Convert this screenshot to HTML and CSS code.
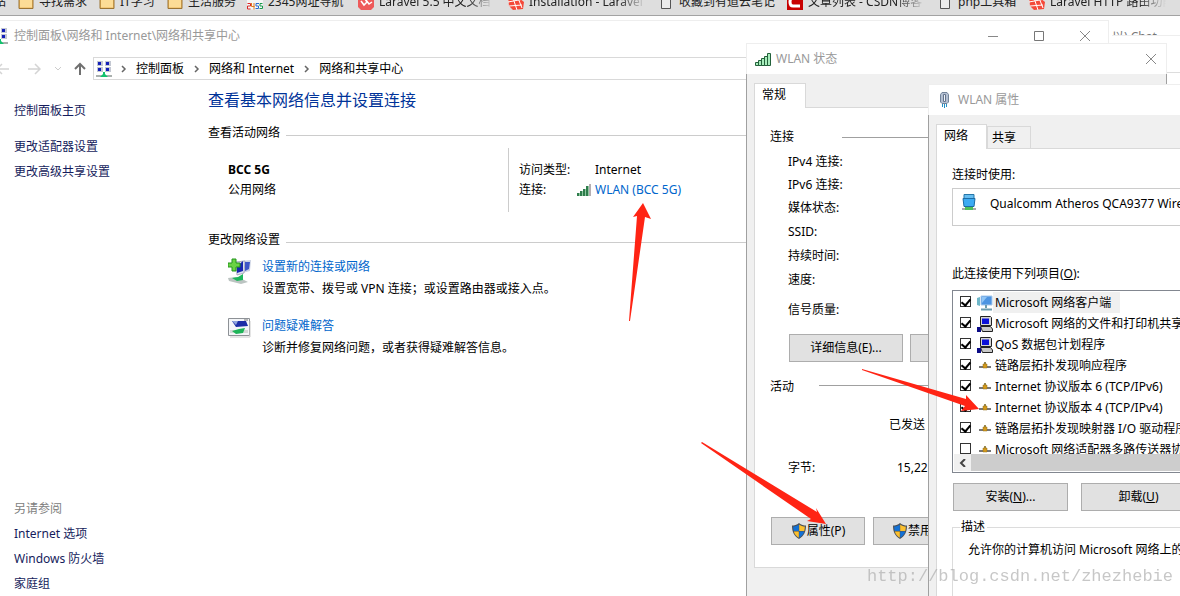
FILE: index.html
```html
<!DOCTYPE html>
<html lang="zh-CN">
<head>
<meta charset="utf-8">
<title>网络和共享中心</title>
<link rel="stylesheet" href="styles.css">
</head>
<body>
<svg class="defs" aria-hidden="true">
  <defs>
    <symbol id="folder" viewBox="0 0 16 16"><path d="M1 2h5l2 2h7v10.5H1z" fill="#e9b45b" stroke="#9b7434"/><path d="M2 5h12v8.500H2z" fill="#fcdc96"/></symbol>
    <symbol id="page" viewBox="0 0 12 16"><path d="M1.500 1.500h9v13h-9z" fill="#ececec" stroke="#555"/></symbol>
    <symbol id="laravel" viewBox="0 0 16 16"><path d="M0 2l6-2 10 8-1 7-10 1-4-4z" fill="#f4493a"/><path d="M0 8l16-3M4 1l5 15M1 12l13-1M10 4l4 10" stroke="#fff" fill="none"/></symbol>
    <symbol id="netgrid" viewBox="0 0 16 16">
      <g fill="#c4c8d2"><path d="M1 0h6v5H1zM9 0h6v5H9zM1 6h6v5H1zM9 6h6v5H9z"/></g>
      <g fill="#1420b8"><path d="M2 1h3v3H2zM10 1h3v3h-3zM2 7h3v3H2zM10 7h3v3h-3z"/></g>
      <path d="M0 14h16v2H0z" fill="#aab0ae"/><path d="M7 11h2v2l3 3H4l3-3z" fill="#13c26e"/>
    </symbol>
    <symbol id="close" viewBox="0 0 12 12"><path d="M1 1l10 10M11 1L1 11" stroke="#888" fill="none"/></symbol>
    <symbol id="shield" viewBox="0 0 16 16">
      <path d="M8 0C6 2 3 2.500 1 2.500 1 9 3 13 8 16c5-3 7-7 7-13.500C13 2.500 10 2 8 0z" fill="#4a4f55"/>
      <path d="M7.800 1.500C6 3 4 3.500 2.200 3.600c0 1.600.1 3 .5 4.400h5.100z" fill="#1271d6"/>
      <path d="M8.200 1.500C10 3 12 3.500 13.800 3.600c0 1.600-.1 3-.5 4.400H8.200z" fill="#fcc02e"/>
      <path d="M2.800 8.400c.8 2.700 2.300 4.700 5 6.300V8.400z" fill="#fcc02e"/>
      <path d="M13.200 8.400c-.8 2.700-2.300 4.700-5 6.300V8.400z" fill="#1271d6"/>
    </symbol>
    <symbol id="pc" viewBox="0 0 16 16">
      <path d="M3.500.5h10l1 1v8h-11z" fill="#d5d5d5" stroke="#222"/><path d="M5 2.500h7V8H5z" fill="#0a10d8"/>
      <path d="M3.500 10.500h10l2 2.500v2.500h-10z" fill="#c9c9c9" stroke="#222"/><path d="M0 11h4v5H0z" fill="#0a0a86"/>
    </symbol>
    <symbol id="proto" viewBox="0 0 16 16"><path d="M2 9h12" stroke="#777" stroke-width="2"/><path d="M7 4h2v2H7z" fill="#9a8a50"/><path d="M6 6h4v4H6z" fill="#d49a1c" stroke="#8d6a18" stroke-width=".5"/></symbol>
    <symbol id="client" viewBox="0 0 16 16"><path d="M0 3l3-1v9l-3-1z" fill="#6fb7c9"/><path d="M4 1h11v9H4z" fill="#4d94e2" stroke="#a8c9ec"/><path d="M5 2h5L5 8z" fill="#90c5f6"/><path d="M9 10v3M4 14.500h11" stroke="#6d9cae" stroke-width="2"/></symbol>
  </defs>
</svg>
<div class="desktop">
  <nav class="bookmarks">
    <a class="bookmark bookmark-cut" href="#">网站</a>
    <a class="bookmark" href="#"><svg class="fav"><use href="#folder"/></svg>寻找需求</a>
    <a class="bookmark" href="#"><svg class="fav"><use href="#folder"/></svg>IT学习</a>
    <a class="bookmark" href="#"><svg class="fav"><use href="#folder"/></svg>生活服务</a>
    <a class="bookmark" href="#"><svg class="fav" viewBox="0 0 16 16"><path d="M0 1h16v14.500H0z" fill="#f5f5f5"/><path d="M.5 9.500h3v2.500h-3v3h3" stroke="#d82727" fill="none"/><path d="M4.500 9v3.500h3M7 9v6.500" stroke="#dd7a20" fill="none"/><path d="M12 9.500H9v2.500h2.500v2.500H8.500" stroke="#2868d0" fill="none"/><path d="M15.500 9.500h-2.500v2.500h2.500v2.500h-3" stroke="#18994a" fill="none"/></svg>2345网址导航</a>
    <a class="bookmark fade" href="#"><svg class="fav" viewBox="0 0 16 16"><path d="M0 0h16v13l-3 3H3l-3-3z" fill="#ee5a5a"/><path d="M3 7l3 4 3-3-2-3M8 6l3 4 3-2" stroke="#fff" stroke-width="1.500" fill="none"/></svg>Laravel 5.5 中文文档</a>
    <a class="bookmark fade" href="#"><svg class="fav"><use href="#laravel"/></svg>Installation - Laravel</a>
    <a class="bookmark" href="#"><svg class="fav fav-page"><use href="#page"/></svg>收藏到有道云笔记</a>
    <a class="bookmark fade" href="#"><svg class="fav" viewBox="0 0 16 16"><path d="M0 0h16v16H0z" fill="#c80000"/><path d="M13 4H6q-3 0-3 4t3 4h7" stroke="#fff" stroke-width="3" fill="none"/></svg>文章列表 - CSDN博客</a>
    <a class="bookmark" href="#"><svg class="fav fav-page"><use href="#page"/></svg>php工具箱</a>
    <a class="bookmark fade" href="#"><svg class="fav"><use href="#laravel"/></svg>Laravel HTTP 路由功能</a>
  </nav>
  <div class="backdrop"><span class="backdrop-text">以) Chat ,</span></div>

  <section class="window center">
    <header class="titlebar center-title">
      <svg class="icon16"><use href="#netgrid"/></svg>
      <span>控制面板\网络和 Internet\网络和共享中心</span>
      <span class="caption">
        <button class="cap" aria-label="最小化"><svg width="12" height="12"><path d="M1 6.500h10" stroke="#888"/></svg></button>
        <button class="cap" aria-label="最大化"><svg width="12" height="12"><path d="M1.500 1.500h9v9h-9z" stroke="#777" fill="none"/></svg></button>
        <button class="cap" aria-label="关闭"><svg width="12" height="12"><use href="#close"/></svg></button>
      </span>
    </header>
    <nav class="navrow">
      <button class="nav-btn" aria-label="后退"><svg width="14" height="14"><path d="M1 7h12M6 2L1 7l5 5" stroke="#d4d4d4" stroke-width="1.500" fill="none"/></svg></button>
      <button class="nav-btn" aria-label="前进"><svg width="14" height="14"><path d="M1 7h12M8 2l5 5-5 5" stroke="#d4d4d4" stroke-width="1.500" fill="none"/></svg></button>
      <button class="nav-btn" aria-label="历史"><svg width="8" height="6"><path d="M1 1l3 3 3-3" stroke="#ccc" fill="none"/></svg></button>
      <button class="nav-btn" aria-label="上移"><svg width="14" height="14"><path d="M7 13V2M2 7l5-5 5 5" stroke="#707070" stroke-width="2" fill="none"/></svg></button>
      <div class="address">
        <svg class="icon16"><use href="#netgrid"/></svg>
        <svg class="sep"><path d="M1 1l3 3-3 3" stroke="#666" stroke-width="1.500" fill="none"/></svg><a href="#">控制面板</a>
        <svg class="sep"><path d="M1 1l3 3-3 3" stroke="#666" stroke-width="1.500" fill="none"/></svg><a href="#">网络和 Internet</a>
        <svg class="sep"><path d="M1 1l3 3-3 3" stroke="#666" stroke-width="1.500" fill="none"/></svg><a href="#">网络和共享中心</a>
      </div>
    </nav>
    <div class="center-body">
      <aside class="sidebar">
        <a class="side-home" href="#">控制面板主页</a>
        <a href="#">更改适配器设置</a>
        <a href="#">更改高级共享设置</a>
        <span class="see-also">另请参阅</span>
        <a href="#">Internet 选项</a>
        <a href="#">Windows 防火墙</a>
        <a href="#">家庭组</a>
      </aside>
      <main class="main">
        <h1>查看基本网络信息并设置连接</h1>
        <h2 class="rule">查看活动网络</h2>
        <div class="network">
          <div class="network-name"><strong>BCC 5G</strong><span>公用网络</span></div>
          <dl class="network-info">
            <dt>访问类型:</dt><dd>Internet</dd>
            <dt class="with-signal">连接:
              <svg width="15" height="12"><path d="M0 9h3v3H0zM3 7h3v5H3zM6 5h3v7H6zM9 2h3v10H9z" fill="#8fc7a0"/><path d="M0 9h2v3H0zM3 7h2v5H3zM6 5h2v7H6zM9 2h2v10H9z" fill="#2f7d4c"/><path d="M12 0h2v12h-2z" fill="#b5aeb2"/></svg></dt>
            <dd><a href="#">WLAN (BCC 5G)</a></dd>
          </dl>
        </div>
        <h2 class="rule change">更改网络设置</h2>
        <div class="task">
          <svg width="24" height="26" viewBox="0 0 24 26">
            <path d="M12 3l11-1-1 11-8 2z" fill="#ccd3e4"/><path d="M8 4l9-1-1 12-7 2z" fill="#dde3f4" stroke="#aab"/><path d="M9 8l6-5v10l-6 2z" fill="#1826b0"/><path d="M17 4h5l-1 7-4 2z" fill="#3d55c8"/>
            <path d="M0 20l8-1 6 2 6 3-7 2-12-3z" fill="#bcc4c2"/><path d="M4 20l6-1 5-3v6l-6 1z" fill="#1eb75c"/>
            <path d="M4 1h4v4h4v4H8v4H4V9H0V5h4z" fill="#6bd344" stroke="#25951c"/>
          </svg>
          <div><a href="#">设置新的连接或网络</a><p>设置宽带、拨号或 VPN 连接；或设置路由器或接入点。</p></div>
        </div>
        <div class="task second">
          <svg width="24" height="22" viewBox="0 0 24 22">
            <path d="M.5 1.500h21v17H.5z" fill="#f4f6f8" stroke="#8d9196"/><path d="M2 20h20V4" stroke="#ccc" fill="none"/><path d="M16 3h4" stroke="#777"/>
            <path d="M4 4h14l2 5-12 1z" fill="#1c2ea6"/><path d="M4 4h6l-2 4z" fill="#8ea5dd"/><path d="M2 13h18v3H2z" fill="#d4d8d6"/><path d="M4 14l7-2 6-1-2 5-7 1z" fill="#1eb458"/>
          </svg>
          <div><a href="#">问题疑难解答</a><p>诊断并修复网络问题，或者获得疑难解答信息。</p></div>
        </div>
      </main>
    </div>
  </section>

  <section class="window dialog status">
    <header class="titlebar">
      <svg width="17" height="13" class="title-icon"><path d="M.5 9.500h3v3h-3zM3.500 7.500h3v5h-3zM6.500 5.500h3v7h-3zM9.500 3.500h3v9h-3zM12.500.5h3v12h-3z" fill="#a8eebc" stroke="#23613b"/></svg>
      <span>WLAN 状态</span>
      <span class="caption"><button class="cap" aria-label="关闭"><svg width="12" height="12"><use href="#close"/></svg></button></span>
    </header>
    <div class="dialog-body">
      <div class="tabs" role="tablist"><button class="tab active" role="tab" aria-selected="true">常规</button></div>
      <div class="panel status-panel">
        <h3 class="group">连接</h3>
        <ul class="facts"><li>IPv4 连接:</li><li>IPv6 连接:</li><li>媒体状态:</li><li>SSID:</li><li>持续时间:</li><li>速度:</li></ul>
        <p class="signal">信号质量:</p>
        <div class="buttons details"><button class="btn">详细信息(E)...</button><button class="btn" aria-label="无线属性"></button></div>
        <h3 class="group activity">活动</h3>
        <p class="sent">已发送</p>
        <p class="bytes"><span>字节:</span><span>15,22</span></p>
        <div class="buttons actions">
          <button class="btn"><svg class="icon16"><use href="#shield"/></svg>属性(P)</button>
          <button class="btn"><svg class="icon16"><use href="#shield"/></svg>禁用(D)</button>
        </div>
      </div>
    </div>
  </section>

  <section class="window dialog props">
    <header class="titlebar">
      <svg width="12" height="16" viewBox="0 0 12 16" class="title-icon"><path d="M3 .5h5l1.500 2V10L8 11.500H3L1.500 10V2.500z" fill="#b4c0d2" stroke="#73849a"/><path d="M4.500 2.500h2v7h-2z" fill="#f2f5f9" stroke="#64748c"/><path d="M3.500 12v3M5.500 12v4M7.500 12v3" stroke="#2390c4"/></svg>
      <span>WLAN 属性</span>
    </header>
    <div class="dialog-body">
      <div class="tabs" role="tablist"><button class="tab active" role="tab" aria-selected="true">网络</button><button class="tab" role="tab">共享</button></div>
      <div class="panel props-panel">
        <p>连接时使用:</p>
        <div class="adapter"><svg width="16" height="16"><path d="M3 .5h10v6H3z" fill="#66bdf0" stroke="#2576a8"/><path d="M2 4.500h12l-1 8H3z" fill="#3cabf3" stroke="#1c6ca5"/><path d="M1 14h14v2H1z" fill="#aaa"/><path d="M4 13h8v3H4z" fill="#4dc05a"/></svg>Qualcomm Atheros QCA9377 Wireless Network Adapter</div>
        <p class="items-label">此连接使用下列项目(<u>O</u>):</p>
        <div class="listbox">
          <div class="items">
            <label class="item"><input type="checkbox" checked><svg class="icon16"><use href="#client"/></svg><span class="selected">Microsoft 网络客户端</span></label>
            <label class="item"><input type="checkbox" checked><svg class="icon16"><use href="#pc"/></svg><span>Microsoft 网络的文件和打印机共享</span></label>
            <label class="item"><input type="checkbox" checked><svg class="icon16"><use href="#pc"/></svg><span>QoS 数据包计划程序</span></label>
            <label class="item"><input type="checkbox" checked><svg class="icon16"><use href="#proto"/></svg><span>链路层拓扑发现响应程序</span></label>
            <label class="item"><input type="checkbox" checked><svg class="icon16"><use href="#proto"/></svg><span>Internet 协议版本 6 (TCP/IPv6)</span></label>
            <label class="item"><input type="checkbox" checked><svg class="icon16"><use href="#proto"/></svg><span>Internet 协议版本 4 (TCP/IPv4)</span></label>
            <label class="item"><input type="checkbox" checked><svg class="icon16"><use href="#proto"/></svg><span>链路层拓扑发现映射器 I/O 驱动程序</span></label>
            <label class="item"><input type="checkbox"><svg class="icon16"><use href="#proto"/></svg><span>Microsoft 网络适配器多路传送器协议</span></label>
          </div>
          <div class="scroll"><button class="scroll-btn" aria-label="向左滚动"><svg width="8" height="8"><path d="M6 0L2 4l4 4" stroke="#444" stroke-width="2" fill="none"/></svg></button><span class="thumb"></span></div>
        </div>
        <div class="buttons manage"><button class="btn">安装(<u>N</u>)...</button><button class="btn">卸载(<u>U</u>)</button></div>
        <fieldset class="desc"><legend>描述</legend><p>允许你的计算机访问 Microsoft 网络上的资源。</p></fieldset>
      </div>
    </div>
  </section>

  <svg class="arrows" aria-hidden="true">
    <path d="M643 203l-10 14 4-1-8 105h1l15-104 6 2z"/>
    <path d="M826 524l-10-16 1 4-115-70-1 1 110 76-4 2z"/>
    <path d="M979 409l-13-14v4l-104-30v1l103 36-4 5z"/>
  </svg>
  <span class="watermark">http://blog.csdn.net/zhezhebie</span>
</div>
</body>
</html>
```
FILE: styles.css
```css
* { box-sizing: border-box; }
body { margin: 0; font: 12px/20px "Noto Sans", "Noto Sans CJK SC", sans-serif; color: #000; }
h1, h2, h3, p, ul, dl, dd { margin: 0; padding: 0; font-weight: normal; font-size: 12px; }
a { color: #0066cc; text-decoration: none; }
button { font: inherit; color: inherit; padding: 0; border: 0; background: none; }
svg { display: block; flex: none; }
.defs { position: absolute; width: 0; height: 0; }
.icon16 { width: 16px; height: 16px; }

.desktop { position: relative; height: 100vh; overflow: hidden; background: #fff; white-space: nowrap; }

.bookmarks {
  display: grid;
  grid-template-columns: 18px 81px 68px 80px 111px 150px 152px 127px 152px 90px 151px;
  align-items: center;
  height: 28px;
  margin-top: -12px;
  background: #dedede;
  border-bottom: 1px solid #a3a3a3;
}
.bookmark { display: flex; align-items: center; gap: 5px; color: #222; overflow: hidden; }
.bookmark-cut { justify-content: flex-end; padding-right: 12px; }
.fav { width: 16px; height: 16px; }
.fav-page { width: 12px; margin-right: 2px; }
.fade { margin-right: 14px; -webkit-mask-image: linear-gradient(to right, #000 80%, transparent); mask-image: linear-gradient(to right, #000 80%, transparent); }

.backdrop { display: flex; justify-content: flex-end; height: 57px; border-bottom: 1px solid #ddd; }
.backdrop-text { width: 68px; height: 20px; padding-top: 11px; overflow: hidden; color: #777; border-bottom: 1px solid #eee; }

.window { position: absolute; background: #fff; border: 1px solid #eee; }
.titlebar { display: flex; align-items: center; height: 30px; color: #999; background: #fff; }
.caption { display: flex; margin-left: auto; }
.cap { display: flex; align-items: center; justify-content: center; width: 46px; height: 29px; }

.center { display: flex; flex-direction: column; top: 20px; left: 0; right: 71px; bottom: 0; border-left: 0; border-bottom: 0; }
.center-title { height: 29px; gap: 6px; }
.center-title .icon16 { margin-left: -8px; }
.navrow { display: flex; align-items: center; margin-top: 7px; gap: 13px; }
.nav-btn:first-child { margin-left: -4px; }
.nav-btn:nth-child(2) { margin-left: 4px; }
.nav-btn:nth-child(4) { margin-left: -2px; }
.address { display: flex; flex: 1; align-items: center; gap: 9px; height: 23px; margin-left: -7px; padding-left: 2px; border: 1px solid #d9d9d9; }
.address a { color: #000; }
.sep { width: 6px; height: 8px; }
.address .sep + a { margin-right: 1px; }
.center-body { display: flex; flex: 1; }
.sidebar { display: flex; flex-direction: column; width: 208px; padding: 18px 0 0 14px; line-height: 25px; }
.sidebar a { color: #151c5c; }
.side-home { margin-bottom: 11px; }
.see-also { margin-top: auto; color: #808080; }
.main { flex: 1; padding-top: 8px; }
.main h1 { font-size: 16px; line-height: 24px; color: #003399; }
.rule { display: flex; align-items: center; gap: 6px; margin-top: 11px; }
.rule::after { content: ""; flex: 1; height: 1px; margin-top: 4px; background: #ccc; }
.network { display: grid; grid-template-columns: 300px 1fr; margin-top: 5px; }
.network-name { display: flex; flex-direction: column; padding: 12px 0 0 20px; }
.network-info { display: grid; grid-template-columns: 76px 1fr; align-content: start; height: 64px; padding: 12px 0 0 10px; border-left: 1px solid #ccc; }
.with-signal { display: flex; align-items: center; justify-content: space-between; padding-right: 3px; }
.change { margin-top: 18px; }
.task { display: flex; gap: 10px; margin-top: 6px; padding-left: 20px; line-height: 22px; }
.task > svg { margin-top: 2px; }
.second { margin-top: 15px; }

.dialog { border-width: 1px 0 0; }
.dialog-body { padding: 9px 7px 40px; background: #f0f0f0; border-left: 1px solid #a0a0a0; border-right: 1px solid #a0a0a0; }
.title-icon { margin-right: 4px; }
.tabs { display: flex; align-items: flex-end; height: 25px; margin-bottom: -1px; }
.tab { height: 23px; padding: 0 14px 0 4px; border: 1px solid #d9d9d9; background: #f0f0f0; }
.tab.active { height: 25px; padding: 0 19px 2px 7px; border-bottom: 0; background: #fff; }
.props .tab.active { padding-right: 18px; }
.panel { border: 1px solid #d9d9d9; background: #fff; }
.buttons { display: flex; }
.btn { display: flex; align-items: center; justify-content: center; height: 28px; border: 1px solid #adadad; background: #e1e1e1; }

.status { top: 43px; left: 746px; right: 13px; }
.status .titlebar { padding-left: 8px; border-left: 1px solid #eee; border-right: 1px solid #eee; }
.status .cap { width: 30px; }
.status-panel { padding: 19px 15px 22px; }
.group { display: flex; align-items: center; }
.group::after { content: ""; flex: 1; height: 1px; margin-left: 48px; background: #a0a0a0; }
.facts { margin-top: 3px; padding-left: 18px; list-style: none; line-height: 23px; }
.facts li:nth-child(n+4) { padding-top: 1px; line-height: 23px; }
.signal { margin-top: 9px; padding-left: 18px; }
.details { gap: 7px; margin-top: 14px; padding-left: 19px; }
.details .btn { width: 114px; }
.activity { margin-top: 15px; }
.activity::after { margin: 0 0 4px 25px; }
.sent { margin-top: 18px; padding-left: 119px; }
.bytes { display: grid; grid-template-columns: 109px 1fr; margin-top: 23px; padding-left: 18px; }
.actions { gap: 8px; margin-top: 39px; padding-left: 1px; }
.actions .btn { width: 94px; }

.props { top: 84px; left: 928px; right: -120px; }
.props .titlebar { padding-left: 10px; gap: 3px; border-left: 1px solid #eee; }
.props-panel { padding: 16px 15px 40px; }
.adapter { display: flex; gap: 13px; height: 38px; margin-top: 3px; padding: 5px 8px; border: 1px solid #ccc; }
.items-label { margin-top: 38px; }
.listbox { margin-top: 6px; padding: 1px; border: 1px solid #828790; }
.items { height: 162px; overflow: hidden; }
.item { display: flex; align-items: center; height: 21px; padding-left: 6px; }
.item input { appearance: none; display: grid; place-items: center; width: 11px; height: 11px; margin: 0 6px 2px 0; border: 1px solid #333; background: #fff; }
.item input:checked::after { content: ""; width: 4px; height: 7px; margin-bottom: 2px; border: solid #000; border-width: 0 2px 2px 0; transform: rotate(40deg); }
.item span { padding: 0 6px 0 2px; line-height: 21px; }
.item .selected { background: #f0f0f0; padding-right: 9px; }
.scroll { display: flex; height: 17px; background: #f0f0f0; }
.scroll-btn { display: flex; align-items: center; justify-content: center; width: 17px; }
.thumb { flex: 1; background: #cdcdcd; }
.manage { gap: 13px; margin-top: 10px; padding-left: 1px; }
.manage .btn { width: 115px; }
.desc { margin: 6px 0 0; padding: 3px 15px 40px; border: 1px solid #dcdcdc; }
.desc legend { margin-left: -8px; padding: 0 2px 0 1px; }

.arrows { position: absolute; inset: 0; width: 100%; height: 100%; fill: #ff2414; pointer-events: none; }
.watermark { position: absolute; right: 7px; bottom: 7px; font: 17px/24px "Liberation Mono", monospace; color: #aaa; opacity: .65; }
```
